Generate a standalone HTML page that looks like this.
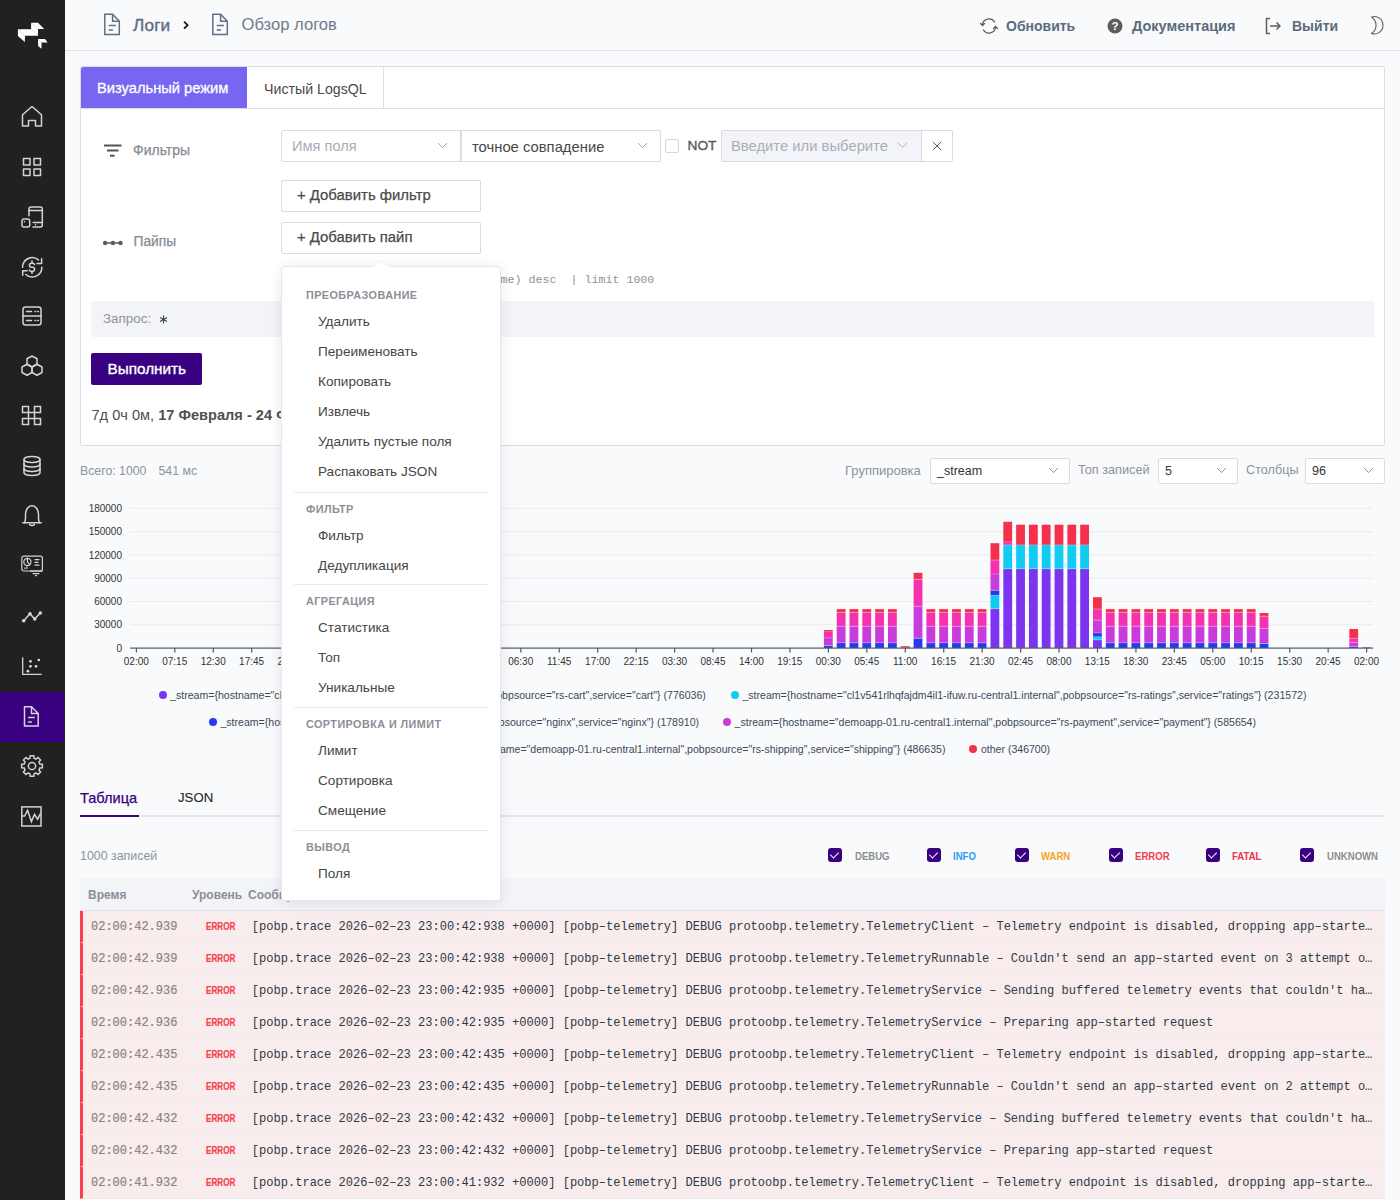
<!DOCTYPE html>
<html><head><meta charset="utf-8">
<style>
*{box-sizing:border-box;margin:0;padding:0}
html,body{width:1400px;height:1200px;overflow:hidden}
body{background:#f9fafc;font-family:"Liberation Sans",sans-serif;position:relative;color:#3c3c3c}
.t{position:absolute;white-space:nowrap;line-height:1}
#sb{position:absolute;left:0;top:0;width:65px;height:1200px;background:#212121}
#sb .act{position:absolute;left:0;top:692px;width:64px;height:50px;background:#3a0082}
#sb svg{position:absolute;left:20px;width:24px;height:24px;fill:none;stroke:#d4d4d4;stroke-width:1.5;stroke-linecap:round;stroke-linejoin:round}
#hdr{position:absolute;left:65px;top:0;width:1335px;height:51px;border-bottom:1px solid #dfe3e8;background:#f9fafc}
#hdr svg{position:absolute;fill:none;stroke:#66778a;stroke-width:1.5;stroke-linecap:round;stroke-linejoin:round}
.card{position:absolute;left:80px;top:66px;width:1305px;height:380px;background:#fff;border:1px solid #dcdee6;border-radius:1.5px}
.box{position:absolute;border:1px solid #d9dbe5;background:#fff;border-radius:2px}
.chev{position:absolute;width:7px;height:7px;border-right:1px solid #8d939c;border-bottom:1px solid #8d939c;transform:rotate(45deg)}
.mi{position:absolute;left:318px;font-size:13.6px;color:#464646;white-space:nowrap;line-height:1}
.mh{position:absolute;left:306px;margin-top:0.5px;font-size:10.8px;font-weight:bold;color:#8b8f98;letter-spacing:0.45px;white-space:nowrap;line-height:1}
.md{position:absolute;left:294px;width:194px;height:1px;background:#e8e9f0}
.row{position:absolute;left:80px;width:1305px;height:32px;background:#f9ecec;border-left:3px solid #f7404a;border-bottom:1px solid #f2eaea}
.row .tm{position:absolute;left:8px;top:9.5px;font-family:"Liberation Mono",monospace;font-size:12px;color:#868686;-webkit-text-stroke:0.2px #868686;line-height:1;white-space:nowrap}
.row .lv{position:absolute;left:123px;top:10px;font-family:"Liberation Sans",sans-serif;font-weight:bold;font-size:11px;color:#f5414b;-webkit-text-stroke:0.2px #f5414b;line-height:1;transform:scaleX(0.74);transform-origin:0 0}
.row .ms{position:absolute;left:168.8px;top:9.5px;font-family:"Liberation Mono",monospace;font-size:12.06px;color:#2d3a49;line-height:1;white-space:nowrap}
.cb{position:absolute;top:848px;width:14px;height:14px;background:#3a0082;border-radius:3px}
.cb:after{content:"";position:absolute;left:4px;top:2px;width:4px;height:7px;border-right:1.5px solid #fff;border-bottom:1.5px solid #fff;transform:rotate(45deg)}
.cl{position:absolute;top:850.7px;font-size:11px;font-weight:bold;line-height:1;white-space:nowrap;transform:scaleX(0.87);transform-origin:0 0}
</style></head><body>
<div id="sb">
  <div class="act"></div>
  <svg style="left:0;top:0;width:65px;height:65px;stroke:none;fill:#fff" viewBox="0 0 65 65"><path d="M17.9 29.2 L31.1 29.2 L31.1 22.8 L38 22.8 L44.2 29 L38 29 L38 35.8 L25 35.8 L24.8 42.1 L17.9 36 Z M38.1 39 L45 39 L47.7 42.6 L41.5 42.6 L41.5 48.7 L38.1 46 Z"/><path d="M18.2 29.5 L24.8 35.6 M31.3 23 L37.8 28.9 M31.6 29.4 L37.3 35 M38.3 39.2 L41.4 42.5" stroke="#9a9a9a" stroke-width="0.35" fill="none"/></svg>
  <svg style="top:104px" viewBox="0 0 24 24"><path d="M2.5 10.8 L12 2.5 L21.5 10.8 V22 H15.5 V16.5 H8.5 V22 H2.5 Z"/></svg>
  <svg style="top:155px" viewBox="0 0 24 24"><rect x="3.5" y="3.5" width="6.5" height="6.5"/><rect x="14" y="3.5" width="6.5" height="6.5"/><rect x="3.5" y="14" width="6.5" height="6.5"/><rect x="14" y="14" width="6.5" height="6.5"/></svg>
  <svg style="top:205px" viewBox="0 0 24 24"><path d="M9 10.8 V4 a2 2 0 0 1 2 -2 h9.3 a2 2 0 0 1 2 2 v16 a2 2 0 0 1 -2 2 h-7.3"/><path d="M9 5.5 H22.3 M13.2 17.6 H22.3"/><rect x="2" y="14" width="7.7" height="8" rx="2"/><path d="M4.5 16.8 h0.1 M15.5 19.8 h0.1"/></svg>
  <svg style="top:255px" viewBox="0 0 24 24"><path d="M2.6 12.2 A9.6 9.6 0 0 1 18.4 4.9"/><path d="M21.8 12.2 A9.6 9.6 0 0 1 5.8 19.5"/><path d="M17 8.4 H21.6 V3.8"/><path d="M7.2 15.8 H2.7 V20.3"/><path d="M14.6 9.6 a2.4 2 0 0 0 -2.2 -1.4 h-0.8 a2.1 2 0 0 0 0 4.1 h0.8 a2.1 2 0 0 1 0 4.1 h-0.8 a2.4 2 0 0 1 -2.2 -1.4"/><path d="M12 6 v2.2 M12 16.4 v2.2"/></svg>
  <svg style="top:304px" viewBox="0 0 24 24"><rect x="3" y="3" width="18" height="18" rx="2.5"/><path d="M3 12 H21"/><path d="M6.5 7.5 h5 M6.5 16.5 h5 M15 7.5 h0.6 M17.8 7.5 h0.6 M15 16.5 h0.6 M17.8 16.5 h0.6"/></svg>
  <svg style="top:354px" viewBox="0 0 24 24"><path d="M12 2 L17 4.75 V10.25 L12 13 L7 10.25 V4.75 Z"/><path d="M7 10.25 L12 13 V18.5 L7 21.25 L2 18.5 V13 Z"/><path d="M17 10.25 L22 13 V18.5 L17 21.25 L12 18.5 V13 Z"/></svg>
  <svg style="top:404px;stroke-linejoin:miter;stroke-linecap:square" viewBox="0 0 24 24"><path d="M2.5 2.5 H8.5 V20.5 H2.5 V14.5 H20.5 V20.5 H14.5 V2.5 H20.5 V8.5 H2.5 Z"/></svg>
  <svg style="top:454px" viewBox="0 0 24 24"><ellipse cx="12" cy="5.5" rx="8" ry="3"/><path d="M4 5.5 v13 a8 3 0 0 0 16 0 v-13"/><path d="M4 10 a8 3 0 0 0 16 0"/><path d="M4 14.5 a8 3 0 0 0 16 0"/></svg>
  <svg style="top:504px" viewBox="0 0 24 24"><path d="M2.8 18.8 H21.2"/><path d="M4.3 18.8 C5.3 17.6 5.5 16 5.5 14 V10.5 A6.5 8.8 0 0 1 18.5 10.5 V14 C18.5 16 18.7 17.6 19.7 18.8"/><path d="M9.6 20.6 A2.8 2 0 0 0 14.4 20.6"/></svg>
  <svg style="top:554px;stroke-width:1.2" viewBox="0 0 24 24"><rect x="1.8" y="2.2" width="20.6" height="14.8" rx="2"/><circle cx="7.4" cy="8" r="3.6"/><path d="M7.4 4.4 V8 L9.8 10.6"/><path d="M15 5.6 h4 M15 8.4 h3 M15 11.2 h4"/><path d="M4.8 14.6 v-0.8 M6.8 14.6 v-1.8"/><path d="M10.5 17.2 h11.5 M13 19.6 h6 M15.5 21.6 h1"/></svg>
  <svg style="top:604px" viewBox="0 0 24 24"><path d="M3.7 16.7 L10 9.7 L14.7 15 L20.3 9"/><g style="stroke:none;fill:#d8d8d8"><circle cx="3.7" cy="16.7" r="1.75"/><circle cx="10" cy="9.7" r="1.75"/><circle cx="14.7" cy="15" r="1.75"/><circle cx="20.3" cy="9" r="1.75"/></g></svg>
  <svg style="top:654px" viewBox="0 0 24 24"><path d="M2.7 3.3 V20.3 H21.7" style="stroke-width:1.3;stroke-linecap:butt;stroke-linejoin:miter"/><g style="stroke:none;fill:#dcdcdc"><circle cx="10.5" cy="7.3" r="1.35"/><circle cx="18.8" cy="6" r="1.35"/><circle cx="10.5" cy="12.3" r="1.35"/><circle cx="16" cy="12.3" r="1.35"/><circle cx="7.9" cy="17.2" r="1.35"/></g></svg>
  <svg style="top:704px;stroke-linejoin:miter;stroke-linecap:butt" viewBox="0 0 24 24"><path d="M4.5 2.8 H11.5 L18.2 9.5 V21.9 H4.5 Z"/><path d="M11.5 2.8 V9.5 H18.2"/><path d="M8.1 13.6 H14.8 M8.1 17.9 H11.9"/></svg>
  <svg style="top:754px;stroke-linejoin:miter" viewBox="0 0 24 24"><path d="M9.93 4.27 L10.18 1.66 L13.82 1.66 L14.07 4.27 L16.00 5.07 L18.02 3.40 L20.60 5.98 L18.93 8.00 L19.73 9.93 L22.34 10.18 L22.34 13.82 L19.73 14.07 L18.93 16.00 L20.60 18.02 L18.02 20.60 L16.00 18.93 L14.07 19.73 L13.82 22.34 L10.18 22.34 L9.93 19.73 L8.00 18.93 L5.98 20.60 L3.40 18.02 L5.07 16.00 L4.27 14.07 L1.66 13.82 L1.66 10.18 L4.27 9.93 L5.07 8.00 L3.40 5.98 L5.98 3.40 L8.00 5.07 Z"/><circle cx="12" cy="12" r="3.6"/></svg>
  <svg style="top:804px;stroke-linejoin:miter;stroke-linecap:butt" viewBox="0 0 24 24"><rect x="1.8" y="2.9" width="19.2" height="19.1"/><path d="M1.8 12 H4.6 L7.6 6.3 L11.4 17.6 L14.5 10.4 L17.6 15.2 L20.3 10 L21 10"/></svg>
</div>
<div id="hdr">
  <svg style="left:37px;top:12px;width:20px;height:24px;stroke:#607084;stroke-linejoin:miter;stroke-linecap:butt" viewBox="0 0 20 24"><path d="M2.8 2.2 H10.6 L17.3 9.2 V22.4 H2.8 Z"/><path d="M10.6 2.2 V9.2 H17.3"/><path d="M6.7 13.5 H13.9 M6.7 18.1 H11"/></svg>
  <div class="t" style="left:68px;top:16.6px;font-size:17.2px;color:#5e6d7f;-webkit-text-stroke:0.4px #5e6d7f;letter-spacing:0.15px">Логи</div>
  <svg style="left:117px;top:20px;width:8px;height:11px;stroke:#1c1c1c;stroke-width:1.9" viewBox="0 0 8 11"><path d="M2.6 2.2 L5.6 5.2 L2.6 8.2"/></svg>
  <svg style="left:145px;top:12px;width:20px;height:24px;stroke:#607084;stroke-linejoin:miter;stroke-linecap:butt" viewBox="0 0 20 24"><path d="M2.8 2.2 H10.6 L17.3 9.2 V22.4 H2.8 Z"/><path d="M10.6 2.2 V9.2 H17.3"/><path d="M6.7 13.5 H13.9 M6.7 18.1 H11"/></svg>
  <div class="t" style="left:176.5px;top:17.3px;font-size:16.6px;color:#6f7c8c">Обзор логов</div>

  <svg style="left:914px;top:17px;width:20px;height:18px;stroke:#5c5c5c;stroke-width:1.3" viewBox="0 0 20 18"><path d="M3.5 8 a6.5 6.5 0 0 1 12 -3"/><path d="M16.5 10 a6.5 6.5 0 0 1 -12 3"/><path d="M1.5 6.5 l2 2 l2 -2"/><path d="M14.5 11.5 l2 -2 l2 2"/></svg>
  <div class="t" style="left:941px;top:19px;font-size:14px;font-weight:bold;color:#5b6b7e">Обновить</div>
  <svg style="left:1042px;top:18px;width:16px;height:16px;stroke:none" viewBox="0 0 16 16"><circle cx="8" cy="8" r="7.5" fill="#5d5d5d"/><text x="8" y="12.3" text-anchor="middle" font-family="Liberation Sans" font-weight="bold" font-size="11.5" fill="#fff">?</text></svg>
  <div class="t" style="left:1067px;top:18.8px;font-size:14.5px;font-weight:bold;color:#5b6b7e">Документация</div>
  <svg style="left:1199px;top:17px;width:20px;height:18px;stroke:#5c5c5c;stroke-width:1.5;stroke-linecap:butt" viewBox="0 0 20 18"><path d="M6 1.5 h-3.5 v15 h3.5"/><path d="M6 9 h10"/><path d="M12.5 5.5 l3.5 3.5 l-3.5 3.5"/></svg>
  <div class="t" style="left:1227px;top:19px;font-size:14px;font-weight:bold;color:#5b6b7e">Выйти</div>
  <svg style="left:1304px;top:15px;width:18px;height:20px;stroke:#5c5c5c;stroke-width:1.1" viewBox="0 0 18 20"><path d="M2.5 2 A8.71 8.71 0 1 1 2.5 18.5 A9.8 9.8 0 0 0 2.5 2 Z"/></svg>
</div>
<div class="card"></div>
<div style="position:absolute;left:81px;top:67px;width:166px;height:41px;background:#7767f0;border-top-left-radius:2px"></div>
<div class="t" style="left:97px;top:81.2px;font-size:14.7px;color:#fff;-webkit-text-stroke:0.3px #fff">Визуальный режим</div>
<div class="t" style="left:264px;top:82px;font-size:14.2px;color:#4a4a4a">Чистый LogsQL</div>
<div style="position:absolute;left:383px;top:67px;width:1px;height:41px;background:#dcdee6"></div>
<div style="position:absolute;left:81px;top:108px;width:1303px;height:1px;background:#dcdee6"></div>

<svg style="position:absolute;left:103px;top:143px;width:20px;height:15px" viewBox="0 0 20 15"><path d="M1 2.5 h17.5 M4 7.5 h11.5 M7 12.8 h4.5" stroke="#505257" stroke-width="1.9"/></svg>
<div class="t" style="left:133px;top:143.3px;font-size:14px;color:#868b93;-webkit-text-stroke:0.25px #868b93">Фильтры</div>

<div class="box" style="left:281px;top:130px;width:180px;height:32px;border-radius:2px 0 0 2px"></div>
<div class="t" style="left:292px;top:139px;font-size:14.6px;color:#a9adb4">Имя поля</div>
<svg style="position:absolute;left:437px;top:142px;width:11px;height:7px" viewBox="0 0 11 7"><path d="M1 1 L5.5 5.5 L10 1" fill="none" stroke="#a3a7ae" stroke-width="1"/></svg>
<div class="box" style="left:461px;top:130px;width:200px;height:32px;border-radius:0 2px 2px 0"></div>
<div class="t" style="left:472px;top:139.5px;font-size:14.8px;color:#474747">точное совпадение</div>
<svg style="position:absolute;left:637px;top:142px;width:11px;height:7px" viewBox="0 0 11 7"><path d="M1 1 L5.5 5.5 L10 1" fill="none" stroke="#a3a7ae" stroke-width="1"/></svg>
<div style="position:absolute;left:665px;top:139px;width:14px;height:14px;border:1px solid #d3d6de;border-radius:2px;background:#fff"></div>
<div class="t" style="left:687.5px;top:139.2px;font-size:13.7px;color:#55585e;-webkit-text-stroke:0.35px #55585e">NOT</div>
<div class="box" style="left:721px;top:130px;width:201px;height:32px;background:#f3f4f9;border-radius:2px 0 0 2px"></div>
<div class="t" style="left:731px;top:139px;font-size:14.8px;color:#aaaeb6">Введите или выберите</div>
<svg style="position:absolute;left:897px;top:142px;width:11px;height:7px" viewBox="0 0 11 7"><path d="M1 1 L5.5 5.5 L10 1" fill="none" stroke="#b3b7be" stroke-width="1"/></svg>
<div class="box" style="left:921px;top:130px;width:32px;height:32px;border-radius:0 2px 2px 0"></div>
<svg style="position:absolute;left:931px;top:140px;width:12px;height:12px" viewBox="0 0 12 12"><path d="M1.8 1.8 L10.2 10.2 M10.2 1.8 L1.8 10.2" stroke="#5a5a5a" stroke-width="0.95"/></svg>

<div class="box" style="left:281px;top:180px;width:200px;height:32px"></div>
<div class="t" style="left:297px;top:188.4px;font-size:14.9px;color:#4a4a4a;-webkit-text-stroke:0.25px #4a4a4a">+ Добавить фильтр</div>

<svg style="position:absolute;left:102px;top:238px;width:22px;height:10px" viewBox="0 0 22 10"><path d="M3 5 H18.5" stroke="#5a5d63" stroke-width="1.5"/><circle cx="3.1" cy="5" r="2.2" fill="#5a5d63"/><circle cx="10.9" cy="5" r="2.2" fill="#5a5d63"/><circle cx="18.5" cy="5" r="2.2" fill="#5a5d63"/></svg>
<div class="t" style="left:133.5px;top:235.2px;font-size:13.8px;color:#868b93;-webkit-text-stroke:0.25px #868b93">Пайпы</div>
<div class="box" style="left:281px;top:222px;width:200px;height:32px"></div>
<div class="t" style="left:297px;top:230.4px;font-size:14.9px;color:#4a4a4a;-webkit-text-stroke:0.25px #4a4a4a">+ Добавить пайп</div>

<div class="t" style="left:339.6px;top:275px;font-family:'Liberation Mono',monospace;font-size:11.67px;color:#8e939b;white-space:pre">_time:7d | sort by (_time) desc  | limit 1000</div>

<div style="position:absolute;left:91px;top:301px;width:1283px;height:36px;background:#f3f4f8;border-radius:3px"></div>
<div class="t" style="left:103px;top:312px;font-size:13.4px;color:#8e939b">Запрос:</div>
<svg style="position:absolute;left:158.5px;top:314.5px;width:9px;height:9px" viewBox="0 0 9 9"><path d="M4.5 0.6 V8.4 M1.1 2.5 L7.9 6.5 M7.9 2.5 L1.1 6.5" stroke="#36404c" stroke-width="1.05"/></svg>

<div style="position:absolute;left:91px;top:353px;width:111px;height:32px;background:#3a0082;border-radius:2px"></div>
<div class="t" style="left:107.5px;top:361px;font-size:15.3px;color:#fff;-webkit-text-stroke:0.35px #fff">Выполнить</div>

<div class="t" style="left:91.5px;top:408px;font-size:14.6px;color:#505050">7д 0ч 0м, <b>17 Февраля - 24 Февраля</b></div>

<div class="t" style="left:80px;top:465px;font-size:12.3px;color:#8d929a">Всего: 1000</div><div class="t" style="left:158.5px;top:465px;font-size:12.3px;color:#8d929a">541 мс</div>

<div class="t" style="left:845px;top:464px;font-size:13px;color:#8d929a">Группировка</div>
<div class="box" style="left:930px;top:458px;width:140px;height:26px"></div>
<div class="t" style="left:937px;top:465px;font-size:12.5px;color:#333">_stream</div>
<svg style="position:absolute;left:1048px;top:467px;width:11px;height:7px" viewBox="0 0 11 7"><path d="M1 1 L5.5 5.5 L10 1" fill="none" stroke="#8d939c" stroke-width="1"/></svg>
<div class="t" style="left:1078px;top:464px;font-size:12.7px;color:#8d929a">Топ записей</div>
<div class="box" style="left:1158px;top:458px;width:80px;height:26px"></div>
<div class="t" style="left:1165px;top:465px;font-size:12.5px;color:#333">5</div>
<svg style="position:absolute;left:1216px;top:467px;width:11px;height:7px" viewBox="0 0 11 7"><path d="M1 1 L5.5 5.5 L10 1" fill="none" stroke="#8d939c" stroke-width="1"/></svg>
<div class="t" style="left:1246px;top:464px;font-size:12.7px;color:#8d929a">Столбцы</div>
<div class="box" style="left:1305px;top:458px;width:80px;height:26px"></div>
<div class="t" style="left:1312px;top:465px;font-size:12.5px;color:#333">96</div>
<svg style="position:absolute;left:1363px;top:467px;width:11px;height:7px" viewBox="0 0 11 7"><path d="M1 1 L5.5 5.5 L10 1" fill="none" stroke="#8d939c" stroke-width="1"/></svg>
<div style="position:absolute;left:0;top:0;width:1400px;height:680px"><svg font-family="Liberation Sans" font-size="10" fill="#333" style="position:absolute;left:0;top:0" width="1400" height="680" viewBox="0 0 1400 680">
<rect x="130" y="624.23" width="1243" height="1" fill="#e9ebef"/>
<rect x="130" y="600.96" width="1243" height="1" fill="#e9ebef"/>
<rect x="130" y="577.69" width="1243" height="1" fill="#e9ebef"/>
<rect x="130" y="554.42" width="1243" height="1" fill="#e9ebef"/>
<rect x="130" y="531.15" width="1243" height="1" fill="#e9ebef"/>
<rect x="130" y="507.88" width="1243" height="1" fill="#e9ebef"/>
<rect x="823.91" y="645.70" width="8.8" height="2.30" fill="#2439f5"/>
<rect x="823.91" y="638.00" width="8.8" height="7.70" fill="#c93cdc"/>
<rect x="823.91" y="645.10" width="8.8" height="1" fill="#fff" fill-opacity="0.3"/>
<rect x="823.91" y="631.50" width="8.8" height="6.50" fill="#f431ae"/>
<rect x="823.91" y="637.40" width="8.8" height="1" fill="#fff" fill-opacity="0.3"/>
<rect x="823.91" y="630.00" width="8.8" height="1.50" fill="#f3314d"/>
<rect x="836.73" y="642.90" width="8.8" height="5.10" fill="#2439f5"/>
<rect x="836.73" y="626.30" width="8.8" height="16.60" fill="#c93cdc"/>
<rect x="836.73" y="642.30" width="8.8" height="1" fill="#fff" fill-opacity="0.3"/>
<rect x="836.73" y="612.50" width="8.8" height="13.80" fill="#f431ae"/>
<rect x="836.73" y="625.70" width="8.8" height="1" fill="#fff" fill-opacity="0.3"/>
<rect x="836.73" y="609.10" width="8.8" height="3.40" fill="#f3314d"/>
<rect x="836.73" y="611.90" width="8.8" height="1" fill="#fff" fill-opacity="0.3"/>
<rect x="849.54" y="642.90" width="8.8" height="5.10" fill="#2439f5"/>
<rect x="849.54" y="626.30" width="8.8" height="16.60" fill="#c93cdc"/>
<rect x="849.54" y="642.30" width="8.8" height="1" fill="#fff" fill-opacity="0.3"/>
<rect x="849.54" y="612.50" width="8.8" height="13.80" fill="#f431ae"/>
<rect x="849.54" y="625.70" width="8.8" height="1" fill="#fff" fill-opacity="0.3"/>
<rect x="849.54" y="609.10" width="8.8" height="3.40" fill="#f3314d"/>
<rect x="849.54" y="611.90" width="8.8" height="1" fill="#fff" fill-opacity="0.3"/>
<rect x="862.35" y="642.90" width="8.8" height="5.10" fill="#2439f5"/>
<rect x="862.35" y="626.30" width="8.8" height="16.60" fill="#c93cdc"/>
<rect x="862.35" y="642.30" width="8.8" height="1" fill="#fff" fill-opacity="0.3"/>
<rect x="862.35" y="612.50" width="8.8" height="13.80" fill="#f431ae"/>
<rect x="862.35" y="625.70" width="8.8" height="1" fill="#fff" fill-opacity="0.3"/>
<rect x="862.35" y="609.10" width="8.8" height="3.40" fill="#f3314d"/>
<rect x="862.35" y="611.90" width="8.8" height="1" fill="#fff" fill-opacity="0.3"/>
<rect x="875.17" y="642.90" width="8.8" height="5.10" fill="#2439f5"/>
<rect x="875.17" y="626.30" width="8.8" height="16.60" fill="#c93cdc"/>
<rect x="875.17" y="642.30" width="8.8" height="1" fill="#fff" fill-opacity="0.3"/>
<rect x="875.17" y="612.50" width="8.8" height="13.80" fill="#f431ae"/>
<rect x="875.17" y="625.70" width="8.8" height="1" fill="#fff" fill-opacity="0.3"/>
<rect x="875.17" y="609.10" width="8.8" height="3.40" fill="#f3314d"/>
<rect x="875.17" y="611.90" width="8.8" height="1" fill="#fff" fill-opacity="0.3"/>
<rect x="887.99" y="642.90" width="8.8" height="5.10" fill="#2439f5"/>
<rect x="887.99" y="626.30" width="8.8" height="16.60" fill="#c93cdc"/>
<rect x="887.99" y="642.30" width="8.8" height="1" fill="#fff" fill-opacity="0.3"/>
<rect x="887.99" y="612.50" width="8.8" height="13.80" fill="#f431ae"/>
<rect x="887.99" y="625.70" width="8.8" height="1" fill="#fff" fill-opacity="0.3"/>
<rect x="887.99" y="609.10" width="8.8" height="3.40" fill="#f3314d"/>
<rect x="887.99" y="611.90" width="8.8" height="1" fill="#fff" fill-opacity="0.3"/>
<rect x="900.80" y="647.80" width="8.8" height="0.20" fill="#2439f5"/>
<rect x="900.80" y="647.50" width="8.8" height="0.30" fill="#c93cdc"/>
<rect x="900.80" y="646.80" width="8.8" height="0.70" fill="#f431ae"/>
<rect x="900.80" y="646.00" width="8.8" height="0.80" fill="#f3314d"/>
<rect x="913.61" y="638.30" width="8.8" height="9.70" fill="#2439f5"/>
<rect x="913.61" y="606.30" width="8.8" height="32.00" fill="#c93cdc"/>
<rect x="913.61" y="637.70" width="8.8" height="1" fill="#fff" fill-opacity="0.3"/>
<rect x="913.61" y="579.50" width="8.8" height="26.80" fill="#f431ae"/>
<rect x="913.61" y="605.70" width="8.8" height="1" fill="#fff" fill-opacity="0.3"/>
<rect x="913.61" y="572.80" width="8.8" height="6.70" fill="#f3314d"/>
<rect x="913.61" y="578.90" width="8.8" height="1" fill="#fff" fill-opacity="0.3"/>
<rect x="926.43" y="642.90" width="8.8" height="5.10" fill="#2439f5"/>
<rect x="926.43" y="626.30" width="8.8" height="16.60" fill="#c93cdc"/>
<rect x="926.43" y="642.30" width="8.8" height="1" fill="#fff" fill-opacity="0.3"/>
<rect x="926.43" y="612.50" width="8.8" height="13.80" fill="#f431ae"/>
<rect x="926.43" y="625.70" width="8.8" height="1" fill="#fff" fill-opacity="0.3"/>
<rect x="926.43" y="609.10" width="8.8" height="3.40" fill="#f3314d"/>
<rect x="926.43" y="611.90" width="8.8" height="1" fill="#fff" fill-opacity="0.3"/>
<rect x="939.25" y="642.90" width="8.8" height="5.10" fill="#2439f5"/>
<rect x="939.25" y="626.30" width="8.8" height="16.60" fill="#c93cdc"/>
<rect x="939.25" y="642.30" width="8.8" height="1" fill="#fff" fill-opacity="0.3"/>
<rect x="939.25" y="612.50" width="8.8" height="13.80" fill="#f431ae"/>
<rect x="939.25" y="625.70" width="8.8" height="1" fill="#fff" fill-opacity="0.3"/>
<rect x="939.25" y="609.10" width="8.8" height="3.40" fill="#f3314d"/>
<rect x="939.25" y="611.90" width="8.8" height="1" fill="#fff" fill-opacity="0.3"/>
<rect x="952.06" y="642.90" width="8.8" height="5.10" fill="#2439f5"/>
<rect x="952.06" y="626.30" width="8.8" height="16.60" fill="#c93cdc"/>
<rect x="952.06" y="642.30" width="8.8" height="1" fill="#fff" fill-opacity="0.3"/>
<rect x="952.06" y="612.50" width="8.8" height="13.80" fill="#f431ae"/>
<rect x="952.06" y="625.70" width="8.8" height="1" fill="#fff" fill-opacity="0.3"/>
<rect x="952.06" y="609.10" width="8.8" height="3.40" fill="#f3314d"/>
<rect x="952.06" y="611.90" width="8.8" height="1" fill="#fff" fill-opacity="0.3"/>
<rect x="964.88" y="642.90" width="8.8" height="5.10" fill="#2439f5"/>
<rect x="964.88" y="626.30" width="8.8" height="16.60" fill="#c93cdc"/>
<rect x="964.88" y="642.30" width="8.8" height="1" fill="#fff" fill-opacity="0.3"/>
<rect x="964.88" y="612.50" width="8.8" height="13.80" fill="#f431ae"/>
<rect x="964.88" y="625.70" width="8.8" height="1" fill="#fff" fill-opacity="0.3"/>
<rect x="964.88" y="609.10" width="8.8" height="3.40" fill="#f3314d"/>
<rect x="964.88" y="611.90" width="8.8" height="1" fill="#fff" fill-opacity="0.3"/>
<rect x="977.69" y="642.90" width="8.8" height="5.10" fill="#2439f5"/>
<rect x="977.69" y="626.30" width="8.8" height="16.60" fill="#c93cdc"/>
<rect x="977.69" y="642.30" width="8.8" height="1" fill="#fff" fill-opacity="0.3"/>
<rect x="977.69" y="612.50" width="8.8" height="13.80" fill="#f431ae"/>
<rect x="977.69" y="625.70" width="8.8" height="1" fill="#fff" fill-opacity="0.3"/>
<rect x="977.69" y="609.10" width="8.8" height="3.40" fill="#f3314d"/>
<rect x="977.69" y="611.90" width="8.8" height="1" fill="#fff" fill-opacity="0.3"/>
<rect x="990.50" y="608.80" width="8.8" height="39.20" fill="#7b35f1"/>
<rect x="990.50" y="595.50" width="8.8" height="13.30" fill="#0fcdf0"/>
<rect x="990.50" y="608.20" width="8.8" height="1" fill="#fff" fill-opacity="0.3"/>
<rect x="990.50" y="590.30" width="8.8" height="5.20" fill="#2439f5"/>
<rect x="990.50" y="594.90" width="8.8" height="1" fill="#fff" fill-opacity="0.3"/>
<rect x="990.50" y="574.00" width="8.8" height="16.30" fill="#c93cdc"/>
<rect x="990.50" y="589.70" width="8.8" height="1" fill="#fff" fill-opacity="0.3"/>
<rect x="990.50" y="560.10" width="8.8" height="13.90" fill="#f431ae"/>
<rect x="990.50" y="573.40" width="8.8" height="1" fill="#fff" fill-opacity="0.3"/>
<rect x="990.50" y="543.20" width="8.8" height="16.90" fill="#f3314d"/>
<rect x="990.50" y="559.50" width="8.8" height="1" fill="#fff" fill-opacity="0.3"/>
<rect x="1003.32" y="568.80" width="8.8" height="79.20" fill="#7b35f1"/>
<rect x="1003.32" y="545.00" width="8.8" height="23.80" fill="#0fcdf0"/>
<rect x="1003.32" y="568.20" width="8.8" height="1" fill="#fff" fill-opacity="0.3"/>
<rect x="1003.32" y="542.00" width="8.8" height="3.00" fill="#f431ae"/>
<rect x="1003.32" y="544.40" width="8.8" height="1" fill="#fff" fill-opacity="0.3"/>
<rect x="1003.32" y="521.80" width="8.8" height="20.20" fill="#f3314d"/>
<rect x="1003.32" y="541.40" width="8.8" height="1" fill="#fff" fill-opacity="0.3"/>
<rect x="1016.14" y="568.80" width="8.8" height="79.20" fill="#7b35f1"/>
<rect x="1016.14" y="545.00" width="8.8" height="23.80" fill="#0fcdf0"/>
<rect x="1016.14" y="568.20" width="8.8" height="1" fill="#fff" fill-opacity="0.3"/>
<rect x="1016.14" y="524.70" width="8.8" height="20.30" fill="#f3314d"/>
<rect x="1016.14" y="544.40" width="8.8" height="1" fill="#fff" fill-opacity="0.3"/>
<rect x="1028.95" y="568.80" width="8.8" height="79.20" fill="#7b35f1"/>
<rect x="1028.95" y="545.00" width="8.8" height="23.80" fill="#0fcdf0"/>
<rect x="1028.95" y="568.20" width="8.8" height="1" fill="#fff" fill-opacity="0.3"/>
<rect x="1028.95" y="524.70" width="8.8" height="20.30" fill="#f3314d"/>
<rect x="1028.95" y="544.40" width="8.8" height="1" fill="#fff" fill-opacity="0.3"/>
<rect x="1041.76" y="568.80" width="8.8" height="79.20" fill="#7b35f1"/>
<rect x="1041.76" y="545.00" width="8.8" height="23.80" fill="#0fcdf0"/>
<rect x="1041.76" y="568.20" width="8.8" height="1" fill="#fff" fill-opacity="0.3"/>
<rect x="1041.76" y="524.70" width="8.8" height="20.30" fill="#f3314d"/>
<rect x="1041.76" y="544.40" width="8.8" height="1" fill="#fff" fill-opacity="0.3"/>
<rect x="1054.58" y="568.80" width="8.8" height="79.20" fill="#7b35f1"/>
<rect x="1054.58" y="545.00" width="8.8" height="23.80" fill="#0fcdf0"/>
<rect x="1054.58" y="568.20" width="8.8" height="1" fill="#fff" fill-opacity="0.3"/>
<rect x="1054.58" y="524.70" width="8.8" height="20.30" fill="#f3314d"/>
<rect x="1054.58" y="544.40" width="8.8" height="1" fill="#fff" fill-opacity="0.3"/>
<rect x="1067.39" y="568.80" width="8.8" height="79.20" fill="#7b35f1"/>
<rect x="1067.39" y="545.00" width="8.8" height="23.80" fill="#0fcdf0"/>
<rect x="1067.39" y="568.20" width="8.8" height="1" fill="#fff" fill-opacity="0.3"/>
<rect x="1067.39" y="524.70" width="8.8" height="20.30" fill="#f3314d"/>
<rect x="1067.39" y="544.40" width="8.8" height="1" fill="#fff" fill-opacity="0.3"/>
<rect x="1080.21" y="568.80" width="8.8" height="79.20" fill="#7b35f1"/>
<rect x="1080.21" y="545.00" width="8.8" height="23.80" fill="#0fcdf0"/>
<rect x="1080.21" y="568.20" width="8.8" height="1" fill="#fff" fill-opacity="0.3"/>
<rect x="1080.21" y="524.70" width="8.8" height="20.30" fill="#f3314d"/>
<rect x="1080.21" y="544.40" width="8.8" height="1" fill="#fff" fill-opacity="0.3"/>
<rect x="1093.02" y="639.90" width="8.8" height="8.10" fill="#7b35f1"/>
<rect x="1093.02" y="636.90" width="8.8" height="3.00" fill="#0fcdf0"/>
<rect x="1093.02" y="639.30" width="8.8" height="1" fill="#fff" fill-opacity="0.3"/>
<rect x="1093.02" y="633.00" width="8.8" height="3.90" fill="#2439f5"/>
<rect x="1093.02" y="636.30" width="8.8" height="1" fill="#fff" fill-opacity="0.3"/>
<rect x="1093.02" y="620.20" width="8.8" height="12.80" fill="#c93cdc"/>
<rect x="1093.02" y="632.40" width="8.8" height="1" fill="#fff" fill-opacity="0.3"/>
<rect x="1093.02" y="609.10" width="8.8" height="11.10" fill="#f431ae"/>
<rect x="1093.02" y="619.60" width="8.8" height="1" fill="#fff" fill-opacity="0.3"/>
<rect x="1093.02" y="597.20" width="8.8" height="11.90" fill="#f3314d"/>
<rect x="1093.02" y="608.50" width="8.8" height="1" fill="#fff" fill-opacity="0.3"/>
<rect x="1105.84" y="642.90" width="8.8" height="5.10" fill="#2439f5"/>
<rect x="1105.84" y="626.30" width="8.8" height="16.60" fill="#c93cdc"/>
<rect x="1105.84" y="642.30" width="8.8" height="1" fill="#fff" fill-opacity="0.3"/>
<rect x="1105.84" y="612.50" width="8.8" height="13.80" fill="#f431ae"/>
<rect x="1105.84" y="625.70" width="8.8" height="1" fill="#fff" fill-opacity="0.3"/>
<rect x="1105.84" y="609.10" width="8.8" height="3.40" fill="#f3314d"/>
<rect x="1105.84" y="611.90" width="8.8" height="1" fill="#fff" fill-opacity="0.3"/>
<rect x="1118.65" y="642.90" width="8.8" height="5.10" fill="#2439f5"/>
<rect x="1118.65" y="626.30" width="8.8" height="16.60" fill="#c93cdc"/>
<rect x="1118.65" y="642.30" width="8.8" height="1" fill="#fff" fill-opacity="0.3"/>
<rect x="1118.65" y="612.50" width="8.8" height="13.80" fill="#f431ae"/>
<rect x="1118.65" y="625.70" width="8.8" height="1" fill="#fff" fill-opacity="0.3"/>
<rect x="1118.65" y="609.10" width="8.8" height="3.40" fill="#f3314d"/>
<rect x="1118.65" y="611.90" width="8.8" height="1" fill="#fff" fill-opacity="0.3"/>
<rect x="1131.47" y="642.90" width="8.8" height="5.10" fill="#2439f5"/>
<rect x="1131.47" y="626.30" width="8.8" height="16.60" fill="#c93cdc"/>
<rect x="1131.47" y="642.30" width="8.8" height="1" fill="#fff" fill-opacity="0.3"/>
<rect x="1131.47" y="612.50" width="8.8" height="13.80" fill="#f431ae"/>
<rect x="1131.47" y="625.70" width="8.8" height="1" fill="#fff" fill-opacity="0.3"/>
<rect x="1131.47" y="609.10" width="8.8" height="3.40" fill="#f3314d"/>
<rect x="1131.47" y="611.90" width="8.8" height="1" fill="#fff" fill-opacity="0.3"/>
<rect x="1144.28" y="642.90" width="8.8" height="5.10" fill="#2439f5"/>
<rect x="1144.28" y="626.30" width="8.8" height="16.60" fill="#c93cdc"/>
<rect x="1144.28" y="642.30" width="8.8" height="1" fill="#fff" fill-opacity="0.3"/>
<rect x="1144.28" y="612.50" width="8.8" height="13.80" fill="#f431ae"/>
<rect x="1144.28" y="625.70" width="8.8" height="1" fill="#fff" fill-opacity="0.3"/>
<rect x="1144.28" y="609.10" width="8.8" height="3.40" fill="#f3314d"/>
<rect x="1144.28" y="611.90" width="8.8" height="1" fill="#fff" fill-opacity="0.3"/>
<rect x="1157.10" y="642.90" width="8.8" height="5.10" fill="#2439f5"/>
<rect x="1157.10" y="626.30" width="8.8" height="16.60" fill="#c93cdc"/>
<rect x="1157.10" y="642.30" width="8.8" height="1" fill="#fff" fill-opacity="0.3"/>
<rect x="1157.10" y="612.50" width="8.8" height="13.80" fill="#f431ae"/>
<rect x="1157.10" y="625.70" width="8.8" height="1" fill="#fff" fill-opacity="0.3"/>
<rect x="1157.10" y="609.10" width="8.8" height="3.40" fill="#f3314d"/>
<rect x="1157.10" y="611.90" width="8.8" height="1" fill="#fff" fill-opacity="0.3"/>
<rect x="1169.91" y="642.90" width="8.8" height="5.10" fill="#2439f5"/>
<rect x="1169.91" y="626.30" width="8.8" height="16.60" fill="#c93cdc"/>
<rect x="1169.91" y="642.30" width="8.8" height="1" fill="#fff" fill-opacity="0.3"/>
<rect x="1169.91" y="612.50" width="8.8" height="13.80" fill="#f431ae"/>
<rect x="1169.91" y="625.70" width="8.8" height="1" fill="#fff" fill-opacity="0.3"/>
<rect x="1169.91" y="609.10" width="8.8" height="3.40" fill="#f3314d"/>
<rect x="1169.91" y="611.90" width="8.8" height="1" fill="#fff" fill-opacity="0.3"/>
<rect x="1182.73" y="642.90" width="8.8" height="5.10" fill="#2439f5"/>
<rect x="1182.73" y="626.30" width="8.8" height="16.60" fill="#c93cdc"/>
<rect x="1182.73" y="642.30" width="8.8" height="1" fill="#fff" fill-opacity="0.3"/>
<rect x="1182.73" y="612.50" width="8.8" height="13.80" fill="#f431ae"/>
<rect x="1182.73" y="625.70" width="8.8" height="1" fill="#fff" fill-opacity="0.3"/>
<rect x="1182.73" y="609.10" width="8.8" height="3.40" fill="#f3314d"/>
<rect x="1182.73" y="611.90" width="8.8" height="1" fill="#fff" fill-opacity="0.3"/>
<rect x="1195.54" y="642.90" width="8.8" height="5.10" fill="#2439f5"/>
<rect x="1195.54" y="626.30" width="8.8" height="16.60" fill="#c93cdc"/>
<rect x="1195.54" y="642.30" width="8.8" height="1" fill="#fff" fill-opacity="0.3"/>
<rect x="1195.54" y="612.50" width="8.8" height="13.80" fill="#f431ae"/>
<rect x="1195.54" y="625.70" width="8.8" height="1" fill="#fff" fill-opacity="0.3"/>
<rect x="1195.54" y="609.10" width="8.8" height="3.40" fill="#f3314d"/>
<rect x="1195.54" y="611.90" width="8.8" height="1" fill="#fff" fill-opacity="0.3"/>
<rect x="1208.36" y="642.90" width="8.8" height="5.10" fill="#2439f5"/>
<rect x="1208.36" y="626.30" width="8.8" height="16.60" fill="#c93cdc"/>
<rect x="1208.36" y="642.30" width="8.8" height="1" fill="#fff" fill-opacity="0.3"/>
<rect x="1208.36" y="612.50" width="8.8" height="13.80" fill="#f431ae"/>
<rect x="1208.36" y="625.70" width="8.8" height="1" fill="#fff" fill-opacity="0.3"/>
<rect x="1208.36" y="609.10" width="8.8" height="3.40" fill="#f3314d"/>
<rect x="1208.36" y="611.90" width="8.8" height="1" fill="#fff" fill-opacity="0.3"/>
<rect x="1221.17" y="642.90" width="8.8" height="5.10" fill="#2439f5"/>
<rect x="1221.17" y="626.30" width="8.8" height="16.60" fill="#c93cdc"/>
<rect x="1221.17" y="642.30" width="8.8" height="1" fill="#fff" fill-opacity="0.3"/>
<rect x="1221.17" y="612.50" width="8.8" height="13.80" fill="#f431ae"/>
<rect x="1221.17" y="625.70" width="8.8" height="1" fill="#fff" fill-opacity="0.3"/>
<rect x="1221.17" y="609.10" width="8.8" height="3.40" fill="#f3314d"/>
<rect x="1221.17" y="611.90" width="8.8" height="1" fill="#fff" fill-opacity="0.3"/>
<rect x="1233.99" y="642.90" width="8.8" height="5.10" fill="#2439f5"/>
<rect x="1233.99" y="626.30" width="8.8" height="16.60" fill="#c93cdc"/>
<rect x="1233.99" y="642.30" width="8.8" height="1" fill="#fff" fill-opacity="0.3"/>
<rect x="1233.99" y="612.50" width="8.8" height="13.80" fill="#f431ae"/>
<rect x="1233.99" y="625.70" width="8.8" height="1" fill="#fff" fill-opacity="0.3"/>
<rect x="1233.99" y="609.10" width="8.8" height="3.40" fill="#f3314d"/>
<rect x="1233.99" y="611.90" width="8.8" height="1" fill="#fff" fill-opacity="0.3"/>
<rect x="1246.80" y="642.90" width="8.8" height="5.10" fill="#2439f5"/>
<rect x="1246.80" y="626.30" width="8.8" height="16.60" fill="#c93cdc"/>
<rect x="1246.80" y="642.30" width="8.8" height="1" fill="#fff" fill-opacity="0.3"/>
<rect x="1246.80" y="612.50" width="8.8" height="13.80" fill="#f431ae"/>
<rect x="1246.80" y="625.70" width="8.8" height="1" fill="#fff" fill-opacity="0.3"/>
<rect x="1246.80" y="609.10" width="8.8" height="3.40" fill="#f3314d"/>
<rect x="1246.80" y="611.90" width="8.8" height="1" fill="#fff" fill-opacity="0.3"/>
<rect x="1259.62" y="643.50" width="8.8" height="4.50" fill="#2439f5"/>
<rect x="1259.62" y="628.50" width="8.8" height="15.00" fill="#c93cdc"/>
<rect x="1259.62" y="642.90" width="8.8" height="1" fill="#fff" fill-opacity="0.3"/>
<rect x="1259.62" y="616.40" width="8.8" height="12.10" fill="#f431ae"/>
<rect x="1259.62" y="627.90" width="8.8" height="1" fill="#fff" fill-opacity="0.3"/>
<rect x="1259.62" y="613.00" width="8.8" height="3.40" fill="#f3314d"/>
<rect x="1259.62" y="615.80" width="8.8" height="1" fill="#fff" fill-opacity="0.3"/>
<rect x="1349.32" y="646.50" width="8.8" height="1.50" fill="#2439f5"/>
<rect x="1349.32" y="642.40" width="8.8" height="4.10" fill="#c93cdc"/>
<rect x="1349.32" y="645.90" width="8.8" height="1" fill="#fff" fill-opacity="0.3"/>
<rect x="1349.32" y="638.20" width="8.8" height="4.20" fill="#f431ae"/>
<rect x="1349.32" y="641.80" width="8.8" height="1" fill="#fff" fill-opacity="0.3"/>
<rect x="1349.32" y="629.00" width="8.8" height="9.20" fill="#f3314d"/>
<rect x="1349.32" y="637.60" width="8.8" height="1" fill="#fff" fill-opacity="0.3"/>
<rect x="1362.14" y="647.60" width="8.8" height="0.40" fill="#f431ae"/>
<rect x="1362.14" y="647.20" width="8.8" height="0.40" fill="#f3314d"/>
<rect x="130" y="647.5" width="1243" height="1.2" fill="#555a62"/>
<rect x="135.80" y="648" width="1.2" height="4.5" fill="#555a62"/>
<text x="136.30" y="665.2" text-anchor="middle">02:00</text>
<rect x="174.24" y="648" width="1.2" height="4.5" fill="#555a62"/>
<text x="174.74" y="665.2" text-anchor="middle">07:15</text>
<rect x="212.69" y="648" width="1.2" height="4.5" fill="#555a62"/>
<text x="213.19" y="665.2" text-anchor="middle">12:30</text>
<rect x="251.13" y="648" width="1.2" height="4.5" fill="#555a62"/>
<text x="251.63" y="665.2" text-anchor="middle">17:45</text>
<rect x="289.58" y="648" width="1.2" height="4.5" fill="#555a62"/>
<text x="290.08" y="665.2" text-anchor="middle">23:00</text>
<rect x="328.02" y="648" width="1.2" height="4.5" fill="#555a62"/>
<text x="328.52" y="665.2" text-anchor="middle">04:15</text>
<rect x="366.46" y="648" width="1.2" height="4.5" fill="#555a62"/>
<text x="366.96" y="665.2" text-anchor="middle">09:30</text>
<rect x="404.91" y="648" width="1.2" height="4.5" fill="#555a62"/>
<text x="405.41" y="665.2" text-anchor="middle">14:45</text>
<rect x="443.35" y="648" width="1.2" height="4.5" fill="#555a62"/>
<text x="443.85" y="665.2" text-anchor="middle">20:00</text>
<rect x="481.79" y="648" width="1.2" height="4.5" fill="#555a62"/>
<text x="482.29" y="665.2" text-anchor="middle">01:15</text>
<rect x="520.24" y="648" width="1.2" height="4.5" fill="#555a62"/>
<text x="520.74" y="665.2" text-anchor="middle">06:30</text>
<rect x="558.68" y="648" width="1.2" height="4.5" fill="#555a62"/>
<text x="559.18" y="665.2" text-anchor="middle">11:45</text>
<rect x="597.12" y="648" width="1.2" height="4.5" fill="#555a62"/>
<text x="597.62" y="665.2" text-anchor="middle">17:00</text>
<rect x="635.57" y="648" width="1.2" height="4.5" fill="#555a62"/>
<text x="636.07" y="665.2" text-anchor="middle">22:15</text>
<rect x="674.01" y="648" width="1.2" height="4.5" fill="#555a62"/>
<text x="674.51" y="665.2" text-anchor="middle">03:30</text>
<rect x="712.46" y="648" width="1.2" height="4.5" fill="#555a62"/>
<text x="712.96" y="665.2" text-anchor="middle">08:45</text>
<rect x="750.90" y="648" width="1.2" height="4.5" fill="#555a62"/>
<text x="751.40" y="665.2" text-anchor="middle">14:00</text>
<rect x="789.34" y="648" width="1.2" height="4.5" fill="#555a62"/>
<text x="789.84" y="665.2" text-anchor="middle">19:15</text>
<rect x="827.79" y="648" width="1.2" height="4.5" fill="#555a62"/>
<text x="828.29" y="665.2" text-anchor="middle">00:30</text>
<rect x="866.23" y="648" width="1.2" height="4.5" fill="#555a62"/>
<text x="866.73" y="665.2" text-anchor="middle">05:45</text>
<rect x="904.67" y="648" width="1.2" height="4.5" fill="#555a62"/>
<text x="905.17" y="665.2" text-anchor="middle">11:00</text>
<rect x="943.12" y="648" width="1.2" height="4.5" fill="#555a62"/>
<text x="943.62" y="665.2" text-anchor="middle">16:15</text>
<rect x="981.56" y="648" width="1.2" height="4.5" fill="#555a62"/>
<text x="982.06" y="665.2" text-anchor="middle">21:30</text>
<rect x="1020.01" y="648" width="1.2" height="4.5" fill="#555a62"/>
<text x="1020.51" y="665.2" text-anchor="middle">02:45</text>
<rect x="1058.45" y="648" width="1.2" height="4.5" fill="#555a62"/>
<text x="1058.95" y="665.2" text-anchor="middle">08:00</text>
<rect x="1096.89" y="648" width="1.2" height="4.5" fill="#555a62"/>
<text x="1097.39" y="665.2" text-anchor="middle">13:15</text>
<rect x="1135.34" y="648" width="1.2" height="4.5" fill="#555a62"/>
<text x="1135.84" y="665.2" text-anchor="middle">18:30</text>
<rect x="1173.78" y="648" width="1.2" height="4.5" fill="#555a62"/>
<text x="1174.28" y="665.2" text-anchor="middle">23:45</text>
<rect x="1212.22" y="648" width="1.2" height="4.5" fill="#555a62"/>
<text x="1212.72" y="665.2" text-anchor="middle">05:00</text>
<rect x="1250.67" y="648" width="1.2" height="4.5" fill="#555a62"/>
<text x="1251.17" y="665.2" text-anchor="middle">10:15</text>
<rect x="1289.11" y="648" width="1.2" height="4.5" fill="#555a62"/>
<text x="1289.61" y="665.2" text-anchor="middle">15:30</text>
<rect x="1327.56" y="648" width="1.2" height="4.5" fill="#555a62"/>
<text x="1328.06" y="665.2" text-anchor="middle">20:45</text>
<rect x="1366.00" y="648" width="1.2" height="4.5" fill="#555a62"/>
<text x="1366.50" y="665.2" text-anchor="middle">02:00</text>
<text x="122" y="651.60" text-anchor="end">0</text>
<text x="122" y="628.33" text-anchor="end">30000</text>
<text x="122" y="605.06" text-anchor="end">60000</text>
<text x="122" y="581.79" text-anchor="end">90000</text>
<text x="122" y="558.52" text-anchor="end">120000</text>
<text x="122" y="535.25" text-anchor="end">150000</text>
<text x="122" y="511.98" text-anchor="end">180000</text>
</svg></div>
<div style="position:absolute;left:80px;top:688px;width:1305px;height:14px;display:flex;justify-content:center;gap:25px;font-size:10.58px;color:#3d4957;line-height:14px;white-space:nowrap">
  <span style="display:flex;align-items:center"><i style="display:inline-block;width:8px;height:8px;border-radius:50%;background:#7b35f1;margin-right:3.5px"></i>_stream={hostname="cl1v541rlhqfajdm4il1-ifuw.ru-central1.internal",pobpsource="rs-cart",service="cart"} (776036)</span>
  <span style="display:flex;align-items:center"><i style="display:inline-block;width:8px;height:8px;border-radius:50%;background:#0fcdf0;margin-right:3.5px"></i>_stream={hostname="cl1v541rlhqfajdm4il1-ifuw.ru-central1.internal",pobpsource="rs-ratings",service="ratings"} (231572)</span>
</div>
<div style="position:absolute;left:80px;top:715px;width:1305px;height:14px;display:flex;justify-content:center;gap:24px;font-size:10.55px;color:#3d4957;line-height:14px;white-space:nowrap">
  <span style="display:flex;align-items:center"><i style="display:inline-block;width:8px;height:8px;border-radius:50%;background:#2439f5;margin-right:3.5px"></i>_stream={hostname="demoapp-01.ru-central1.internal",pobpsource="nginx",service="nginx"} (178910)</span>
  <span style="display:flex;align-items:center"><i style="display:inline-block;width:8px;height:8px;border-radius:50%;background:#c93cdc;margin-right:3.5px"></i>_stream={hostname="demoapp-01.ru-central1.internal",pobpsource="rs-payment",service="payment"} (585654)</span>
</div>
<div style="position:absolute;left:80px;top:742px;width:1305px;height:14px;display:flex;justify-content:center;gap:24px;font-size:10.55px;color:#3d4957;line-height:14px;white-space:nowrap">
  <span style="display:flex;align-items:center"><i style="display:inline-block;width:8px;height:8px;border-radius:50%;background:#f431ae;margin-right:3.5px"></i>_stream={hostname="demoapp-01.ru-central1.internal",pobpsource="rs-shipping",service="shipping"} (486635)</span>
  <span style="display:flex;align-items:center"><i style="display:inline-block;width:8px;height:8px;border-radius:50%;background:#f3314d;margin-right:3.5px"></i>other (346700)</span>
</div>
<div class="t" style="left:80px;top:791px;font-size:14.6px;color:#3a0082;-webkit-text-stroke:0.25px #3a0082">Таблица</div>
<div class="t" style="left:178px;top:790.5px;font-size:13.2px;color:#2a2a2a;-webkit-text-stroke:0.15px #2a2a2a">JSON</div>
<div style="position:absolute;left:80px;top:815px;width:1305px;height:2px;background:#e5e7ec"></div>
<div style="position:absolute;left:80px;top:815px;width:59px;height:2px;background:#3a0082"></div>
<div class="t" style="left:80px;top:849.5px;font-size:12.4px;color:#8d929a">1000 записей</div>

<div class="cb" style="left:828px"></div><div class="cl" style="left:855px;color:#8e8e8e">DEBUG</div>
<div class="cb" style="left:927px"></div><div class="cl" style="left:953px;color:#2e9bf0">INFO</div>
<div class="cb" style="left:1015px"></div><div class="cl" style="left:1041px;color:#f5a524">WARN</div>
<div class="cb" style="left:1109px"></div><div class="cl" style="left:1135px;color:#f2404f">ERROR</div>
<div class="cb" style="left:1206px"></div><div class="cl" style="left:1232px;color:#f2334d">FATAL</div>
<div class="cb" style="left:1300px"></div><div class="cl" style="left:1327px;color:#8e8e8e">UNKNOWN</div>
<div style="position:absolute;left:80px;top:879px;width:1305px;height:32px;background:#f3f4f8;border-bottom:1px solid #e3e5ed"></div>
<div class="t" style="left:88px;top:888.5px;font-size:12px;font-weight:bold;color:#8a8f98">Время</div>
<div class="t" style="left:192px;top:888.5px;font-size:12px;font-weight:bold;color:#8a8f98">Уровень</div>
<div class="t" style="left:248px;top:888.5px;font-size:12px;font-weight:bold;color:#8a8f98">Сообщение</div>

<div class="row" style="top:911px"><div class="tm">02:00:42.939</div><div class="lv">ERROR</div><div class="ms">[pobp.trace 2026–02–23 23:00:42:938 +0000] [pobp–telemetry] DEBUG protoobp.telemetry.TelemetryClient – Telemetry endpoint is disabled, dropping app–starte…</div></div>
<div class="row" style="top:943px"><div class="tm">02:00:42.939</div><div class="lv">ERROR</div><div class="ms">[pobp.trace 2026–02–23 23:00:42:938 +0000] [pobp–telemetry] DEBUG protoobp.telemetry.TelemetryRunnable – Couldn't send an app–started event on 3 attempt o…</div></div>
<div class="row" style="top:975px"><div class="tm">02:00:42.936</div><div class="lv">ERROR</div><div class="ms">[pobp.trace 2026–02–23 23:00:42:935 +0000] [pobp–telemetry] DEBUG protoobp.telemetry.TelemetryService – Sending buffered telemetry events that couldn't ha…</div></div>
<div class="row" style="top:1007px"><div class="tm">02:00:42.936</div><div class="lv">ERROR</div><div class="ms">[pobp.trace 2026–02–23 23:00:42:935 +0000] [pobp–telemetry] DEBUG protoobp.telemetry.TelemetryService – Preparing app–started request</div></div>
<div class="row" style="top:1039px"><div class="tm">02:00:42.435</div><div class="lv">ERROR</div><div class="ms">[pobp.trace 2026–02–23 23:00:42:435 +0000] [pobp–telemetry] DEBUG protoobp.telemetry.TelemetryClient – Telemetry endpoint is disabled, dropping app–starte…</div></div>
<div class="row" style="top:1071px"><div class="tm">02:00:42.435</div><div class="lv">ERROR</div><div class="ms">[pobp.trace 2026–02–23 23:00:42:435 +0000] [pobp–telemetry] DEBUG protoobp.telemetry.TelemetryRunnable – Couldn't send an app–started event on 2 attempt o…</div></div>
<div class="row" style="top:1103px"><div class="tm">02:00:42.432</div><div class="lv">ERROR</div><div class="ms">[pobp.trace 2026–02–23 23:00:42:432 +0000] [pobp–telemetry] DEBUG protoobp.telemetry.TelemetryService – Sending buffered telemetry events that couldn't ha…</div></div>
<div class="row" style="top:1135px"><div class="tm">02:00:42.432</div><div class="lv">ERROR</div><div class="ms">[pobp.trace 2026–02–23 23:00:42:432 +0000] [pobp–telemetry] DEBUG protoobp.telemetry.TelemetryService – Preparing app–started request</div></div>
<div class="row" style="top:1167px"><div class="tm">02:00:41.932</div><div class="lv">ERROR</div><div class="ms">[pobp.trace 2026–02–23 23:00:41:932 +0000] [pobp–telemetry] DEBUG protoobp.telemetry.TelemetryClient – Telemetry endpoint is disabled, dropping app–starte…</div></div>
<div style="position:absolute;left:281px;top:266px;width:220px;height:635px;background:#fff;border:1px solid #e6e7ee;border-radius:4px;box-shadow:0 2px 14px rgba(30,30,60,0.10)"></div>
<svg style="position:absolute;left:372px;top:259px;width:18px;height:9px" viewBox="0 0 18 9"><path d="M1 8.5 L9 1.5 L17 8.5" fill="#fff" stroke="#eceef3" stroke-width="1"/><rect x="0" y="7.6" width="18" height="1.4" fill="#fff"/></svg>
<div class="mh" style="top:289px">ПРЕОБРАЗОВАНИЕ</div>
<div class="mi" style="top:315px">Удалить</div>
<div class="mi" style="top:345px">Переименовать</div>
<div class="mi" style="top:375px">Копировать</div>
<div class="mi" style="top:405px">Извлечь</div>
<div class="mi" style="top:435px">Удалить пустые поля</div>
<div class="mi" style="top:465px">Распаковать JSON</div>
<div class="md" style="top:492px"></div>
<div class="mh" style="top:503px">ФИЛЬТР</div>
<div class="mi" style="top:529px">Фильтр</div>
<div class="mi" style="top:559px">Дедупликация</div>
<div class="md" style="top:584px"></div>
<div class="mh" style="top:595px">АГРЕГАЦИЯ</div>
<div class="mi" style="top:621px">Статистика</div>
<div class="mi" style="top:651px">Топ</div>
<div class="mi" style="top:681px">Уникальные</div>
<div class="md" style="top:707px"></div>
<div class="mh" style="top:718px">СОРТИРОВКА И ЛИМИТ</div>
<div class="mi" style="top:744px">Лимит</div>
<div class="mi" style="top:774px">Сортировка</div>
<div class="mi" style="top:804px">Смещение</div>
<div class="md" style="top:830px"></div>
<div class="mh" style="top:841px">ВЫВОД</div>
<div class="mi" style="top:867px">Поля</div>
</body></html>
